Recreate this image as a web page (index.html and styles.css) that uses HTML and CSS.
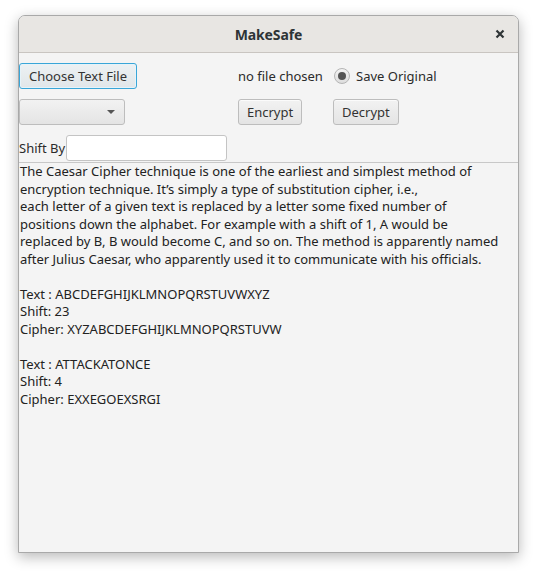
FILE: index.html
```html
<!DOCTYPE html>
<html>
<head>
<meta charset="utf-8">
<link rel="stylesheet" href="styles.css">
</head>
<body>
<div class="window">
  <div class="titlebar">
    <span class="title">MakeSafe</span>
    <span class="close">
      <svg width="10" height="10" viewBox="0 0 10 10"><path d="M1.5 1.5 L8.5 8.5 M8.5 1.5 L1.5 8.5" stroke="#2e3436" stroke-width="2.2" stroke-linecap="butt"/></svg>
    </span>
  </div>
  <div class="controls">
    <button class="btn btn-focus">Choose Text File</button>
    <span class="label">no file chosen</span>
    <span class="radio-wrap"><span class="radio"><span class="dot"></span></span><span class="label">Save Original</span></span>

    <div class="combo"><span class="arrow"></span></div>
    <button class="btn">Encrypt</button>
    <button class="btn">Decrypt</button>

    <div class="shift"><span class="label shift-label">Shift By</span><span class="field"></span></div>
  </div>
  <div class="textarea">
    <p>The Caesar Cipher technique is one of the earliest and simplest method of<br>encryption technique. It’s simply a type of substitution cipher, i.e.,<br>each letter of a given text is replaced by a letter some fixed number of<br>positions down the alphabet. For example with a shift of 1, A would be<br>replaced by B, B would become C, and so on. The method is apparently named<br>after Julius Caesar, who apparently used it to communicate with his officials.</p>
    <p>Text : ABCDEFGHIJKLMNOPQRSTUVWXYZ<br>Shift: 23<br>Cipher: XYZABCDEFGHIJKLMNOPQRSTUVW</p>
    <p>Text : ATTACKATONCE<br>Shift: 4<br>Cipher: EXXEGOEXSRGI</p>
  </div>
</div>
</body>
</html>
```
FILE: styles.css
```css
html, body {
  margin: 0;
  padding: 0;
  background: #ffffff;
  width: 540px;
  height: 572px;
  overflow: hidden;
  font-family: "Noto Sans", "DejaVu Sans", sans-serif;
  color: #2b2b2b;
}

.window {
  margin: 15px 0 0 18px;
  width: 499px;
  height: 536px;
  border: 1px solid #a9a9a9;
  border-radius: 7px 7px 0 0;
  background: #f4f4f4;
  box-shadow: 0 4px 14px rgba(0, 0, 0, 0.28);
  display: flex;
  flex-direction: column;
  overflow: hidden;
}

.titlebar {
  height: 36px;
  flex: 0 0 auto;
  background: #e8e6e3;
  border-bottom: 1px solid #c9c5c1;
  display: flex;
  align-items: center;
  justify-content: center;
  position: relative;
}

.title {
  font-weight: bold;
  font-size: 14px;
  color: #2e3436;
  letter-spacing: -0.1px;
}

.close {
  position: absolute;
  right: 13px;
  top: 13px;
  width: 10px;
  height: 10px;
  display: flex;
}

.controls {
  display: grid;
  grid-template-columns: 219px 95px 1fr;
  grid-auto-rows: 26px;
  row-gap: 10px;
  padding-top: 10px;
  align-items: center;
  font-size: 13px;
}

.label {
  font-size: 13px;
  color: #2b2b2b;
  white-space: nowrap;
}

.btn {
  justify-self: start;
  height: 26px;
  padding: 0 8px;
  white-space: nowrap;
  font-family: "Noto Sans", "DejaVu Sans", sans-serif;
  font-size: 13px;
  color: #333;
  border: 1px solid #bdbdbd;
  border-radius: 3px;
  background: linear-gradient(#f2f2f2, #e4e4e4);
  box-shadow: inset 0 1px 0 #fbfbfb;
}

.btn-focus {
  padding: 0 9px;
  border-color: #3aa6d8;
  background: linear-gradient(#edf1f3, #e1e6e9);
  box-shadow: inset 0 0 0 1px #e6f3f9;
}

.radio-wrap {
  display: flex;
  align-items: center;
  gap: 6px;
  margin-left: 1px;
}

.radio {
  width: 14px;
  height: 14px;
  border: 1px solid #b5b5b5;
  border-radius: 50%;
  background: linear-gradient(#f3f3f3, #dedede);
  display: flex;
  align-items: center;
  justify-content: center;
}

.dot {
  width: 8px;
  height: 8px;
  border-radius: 50%;
  background: #555;
}

.combo {
  height: 24px;
  border: 1px solid #bdbdbd;
  border-radius: 3px;
  background: linear-gradient(#f2f2f2, #e4e4e4);
  display: flex;
  align-items: center;
  justify-content: flex-end;
  padding-right: 9px;
  box-sizing: content-box;
  width: 95px;
}

.arrow {
  width: 0;
  height: 0;
  border-left: 4px solid transparent;
  border-right: 4px solid transparent;
  border-top: 4px solid #555;
}

.shift {
  display: flex;
  align-items: center;
  height: 26px;
}

.shift-label {
  width: 47px;
}

.field {
  width: 159px;
  height: 24px;
  border: 1px solid #c4c4c4;
  border-radius: 3px;
  background: #ffffff;
}

.textarea {
  margin-top: 1px;
  border-top: 1px solid #c8c8c8;
  flex: 1 1 auto;
  padding: 0 1px;
  font-size: 13px;
  line-height: 17.5px;
  color: #222;
}

.textarea p {
  margin: 0 0 17.5px 0;
}
```
